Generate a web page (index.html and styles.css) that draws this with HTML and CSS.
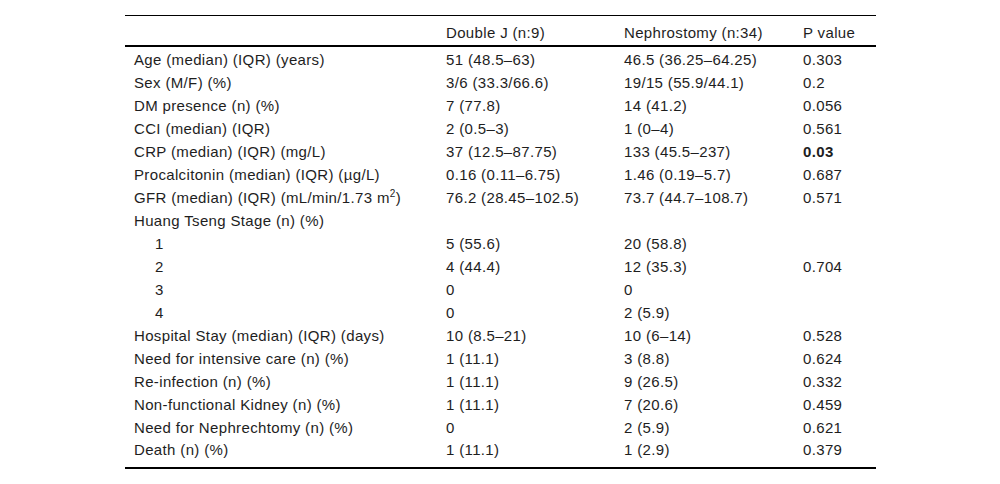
FILE: index.html
```html
<!DOCTYPE html>
<html>
<head>
<meta charset="utf-8">
<link rel="stylesheet" href="styles.css">
</head>
<body>
<table class="data">
  <thead>
    <tr><th class="c1"></th><th class="c2">Double J (n:9)</th><th class="c3">Nephrostomy (n:34)</th><th class="c4">P value</th></tr>
  </thead>
  <tbody>
    <tr><td>Age (median) (IQR) (years)</td><td>51 (48.5–63)</td><td>46.5 (36.25–64.25)</td><td>0.303</td></tr>
    <tr><td>Sex (M/F) (%)</td><td>3/6 (33.3/66.6)</td><td>19/15 (55.9/44.1)</td><td>0.2</td></tr>
    <tr><td>DM presence (n) (%)</td><td>7 (77.8)</td><td>14 (41.2)</td><td>0.056</td></tr>
    <tr><td>CCI (median) (IQR)</td><td>2 (0.5–3)</td><td>1 (0–4)</td><td>0.561</td></tr>
    <tr><td>CRP (median) (IQR) (mg/L)</td><td>37 (12.5–87.75)</td><td>133 (45.5–237)</td><td><b>0.03</b></td></tr>
    <tr><td>Procalcitonin (median) (IQR) (µg/L)</td><td>0.16 (0.11–6.75)</td><td>1.46 (0.19–5.7)</td><td>0.687</td></tr>
    <tr><td>GFR (median) (IQR) (mL/min/1.73 m<sup>2</sup>)</td><td>76.2 (28.45–102.5)</td><td>73.7 (44.7–108.7)</td><td>0.571</td></tr>
    <tr><td>Huang Tseng Stage (n) (%)</td><td></td><td></td><td></td></tr>
    <tr><td class="sub">1</td><td>5 (55.6)</td><td>20 (58.8)</td><td></td></tr>
    <tr><td class="sub">2</td><td>4 (44.4)</td><td>12 (35.3)</td><td>0.704</td></tr>
    <tr><td class="sub">3</td><td>0</td><td>0</td><td></td></tr>
    <tr><td class="sub">4</td><td>0</td><td>2 (5.9)</td><td></td></tr>
    <tr><td>Hospital Stay (median) (IQR) (days)</td><td>10 (8.5–21)</td><td>10 (6–14)</td><td>0.528</td></tr>
    <tr><td>Need for intensive care (n) (%)</td><td>1 (11.1)</td><td>3 (8.8)</td><td>0.624</td></tr>
    <tr><td>Re-infection (n) (%)</td><td>1 (11.1)</td><td>9 (26.5)</td><td>0.332</td></tr>
    <tr><td>Non-functional Kidney (n) (%)</td><td>1 (11.1)</td><td>7 (20.6)</td><td>0.459</td></tr>
    <tr><td>Need for Nephrechtomy (n) (%)</td><td>0</td><td>2 (5.9)</td><td>0.621</td></tr>
    <tr class="last"><td>Death (n) (%)</td><td>1 (11.1)</td><td>1 (2.9)</td><td>0.379</td></tr>
  </tbody>
</table>
</body>
</html>
```
FILE: styles.css
```css
html, body {
  margin: 0;
  padding: 0;
  background: #fff;
}
body {
  padding-top: 15px;
  font-family: "Liberation Sans", Arial, sans-serif;
  font-size: 15px;
  letter-spacing: 0.35px;
  color: #1e1e1e;
}
.data {
  margin-left: 125px;
  width: 751px;
  table-layout: fixed;
  border-collapse: separate;
  border-spacing: 0;
}
.data th, .data td {
  box-sizing: border-box;
  padding: 1px 9px 0;
  vertical-align: middle;
  white-space: nowrap;
  text-align: left;
}
.data th {
  font-weight: normal;
  height: 32px;
  padding-top: 3px;
  border-top: 1px solid #000;
  border-bottom: 2px solid #000;
}
.data td {
  height: 23px;
}
.data .last td {
  height: 31px;
  padding-bottom: 7px;
  border-bottom: 2px solid #000;
}
.data .c1 { width: 312px; }
.data .c2 { width: 178px; }
.data .c3 { width: 179px; }
.data .c4 { width: 82px; }
.data td.sub { padding-left: 30px; }
.data sup {
  font-size: 10px;
  line-height: 0;
}
```
